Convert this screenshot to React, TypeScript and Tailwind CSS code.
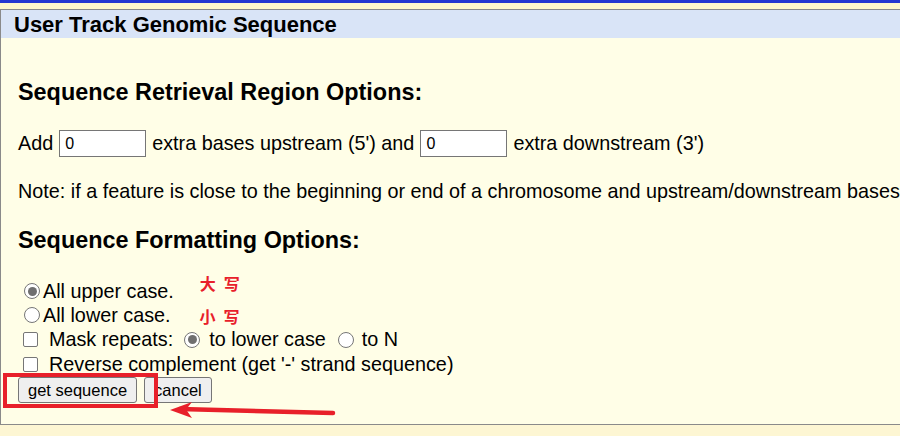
function Radio({ checked }: { checked?: boolean }) {
  return (
    <span className="inline-flex h-[16px] w-[16px] items-center justify-center rounded-full border border-[#767676] bg-white">
      {checked && <span className="h-[9px] w-[9px] rounded-full bg-[#6f6f6f]" />}
    </span>
  );
}

function Checkbox() {
  return <span className="inline-block h-[15px] w-[15px] rounded-[2px] border border-[#767676] bg-white" />;
}

function NumInput() {
  return (
    <span className="mx-[6px] inline-flex h-[27px] w-[87px] items-center border border-[#767676] bg-white pl-[5px] text-[16px]">
      0
    </span>
  );
}

function Btn({ label }: { label: string }) {
  return (
    <span className="inline-flex h-[26px] items-center rounded-[3px] border border-[#767676] bg-[#efefef] px-[9px] text-[16.5px] leading-none">
      {label}
    </span>
  );
}

export default function App() {
  return (
    <div
      className="relative h-[436px] w-[900px] overflow-hidden bg-[#fdf6d3] text-black"
      style={{ fontFamily: '"Liberation Sans", Arial, "Noto Sans CJK SC", sans-serif' }}
    >
      <div className="h-[3px] bg-[#2537d1]" />
      <div className="h-[6px] bg-[#fff7cd]" />
      <div className="h-[416px] border-y border-l border-[#8a8a8a] bg-[#fffee7]">
        <div className="flex h-[28px] items-center bg-[#d9e4f7] pl-[13px] text-[22px] font-bold">
          User Track Genomic Sequence
        </div>
        <div className="flex flex-col pl-[17px] text-[19.8px]">
          <div className="mt-[43px] flex h-[24px] items-center text-[23.4px] font-bold">
            Sequence Retrieval Region Options:
          </div>
          <div className="mt-[25px] flex h-[27px] items-center whitespace-nowrap">
            Add
            <NumInput />
            extra bases upstream (5') and
            <NumInput />
            extra downstream (3')
          </div>
          <div className="mt-[24px] flex h-[22px] items-center whitespace-nowrap">
            Note: if a feature is close to the beginning or end of a chromosome and upstream/downstream bases are added, they may be truncated in order to avoid extending past the edge of the chromosome.
          </div>
          <div className="mt-[26px] flex h-[24px] items-center text-[23.4px] font-bold">
            Sequence Formatting Options:
          </div>
          <div className="mt-[26px] flex h-[24px] items-center whitespace-nowrap">
            <span className="ml-[6px] mr-[3px] flex"><Radio checked /></span>
            <span className="mt-[2px]">All upper case.</span>
            <span className="ml-[26px] -mt-[12px] text-[16px] font-bold tracking-[8px] text-[#e8202a]">大写</span>
          </div>
          <div className="flex h-[24px] items-center whitespace-nowrap">
            <span className="ml-[6px] mr-[3px] flex"><Radio /></span>
            <span className="mt-[2px]">All lower case.</span>
            <span className="ml-[29px] mt-[6px] text-[16px] font-bold tracking-[8px] text-[#e8202a]">小写</span>
          </div>
          <div className="flex h-[25px] items-center whitespace-nowrap">
            <span className="ml-[5px] mr-[11px] flex"><Checkbox /></span>
            Mask repeats:
            <span className="ml-[11px] mr-[9px] flex"><Radio checked /></span>
            to lower case
            <span className="ml-[12px] mr-[8px] flex"><Radio /></span>
            to N
          </div>
          <div className="flex h-[25px] items-center whitespace-nowrap">
            <span className="ml-[5px] mr-[11px] flex"><Checkbox /></span>
            Reverse complement (get '-' strand sequence)
          </div>
          <div className="flex h-[26px] items-center gap-[7px]">
            <Btn label="get sequence" />
            <Btn label="cancel" />
          </div>
        </div>
      </div>

      <div className="absolute left-[3px] top-[373px] h-[35px] w-[155px] border-[4px] border-[#e8202a]" />
      <svg className="absolute left-0 top-0" width="900" height="436" viewBox="0 0 900 436">
        <path d="M333 413 L180 409" stroke="#e8202a" strokeWidth="4.5" strokeLinecap="round" fill="none" />
        <path d="M170 410 L192 402 L186 409.5 L192 418 Z" fill="#e8202a" />
      </svg>
    </div>
  );
}
